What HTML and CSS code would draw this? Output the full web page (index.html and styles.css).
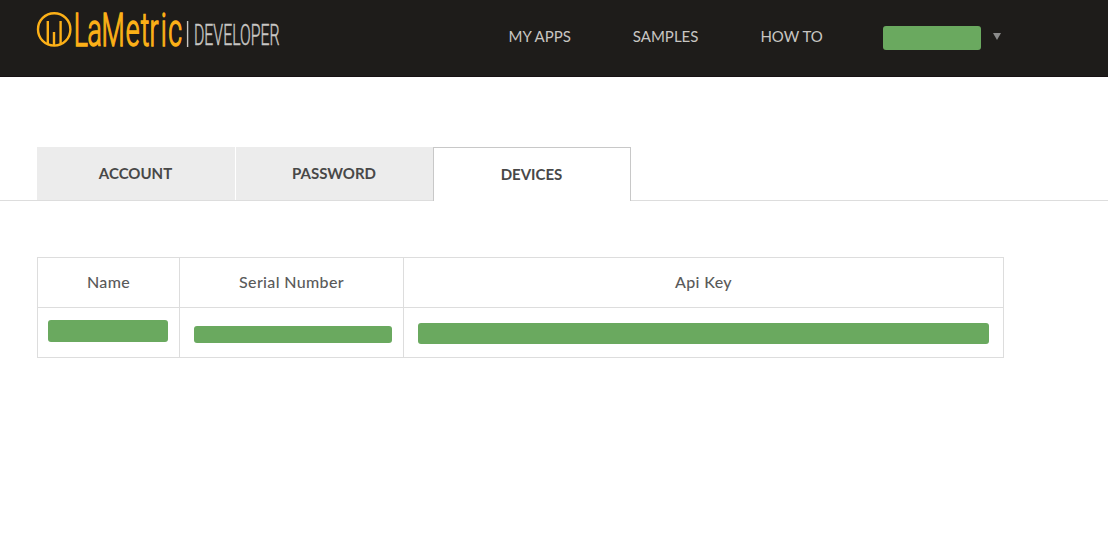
FILE: index.html
```html
<!DOCTYPE html>
<html lang="en">
<head>
<meta charset="utf-8">
<title>LaMetric Developer</title>
<link rel="stylesheet" href="styles.css">
</head>
<body>
<header class="header">
  <a class="logo" aria-label="LaMetric Developer">
    <svg width="256" height="60" viewBox="36 0 256 60">
      <g fill="none" stroke="#fcb017" stroke-width="2.4">
        <circle cx="54.2" cy="29.4" r="16.2"/>
        <path d="M47.8 21v23M54 32v14M60.6 21v23"/>
      </g>
      <text class="logo-name" transform="scale(.57 1)" x="129.5 153.3 178.1 220.7 247 262.3 281.8 295.1" y="46.4">LaMetric</text>
      <path d="M187.6 21v26" stroke="#c8c6c3" stroke-width="1.4"/>
      <text class="logo-sub" x="194" y="45" textLength="85.5" lengthAdjust="spacingAndGlyphs">DEVELOPER</text>
    </svg>
  </a>
  <nav class="nav">
    <a class="nav-link">MY APPS</a>
    <a class="nav-link">SAMPLES</a>
    <a class="nav-link">HOW TO</a>
  </nav>
  <div class="user">
    <span class="mask mask-user"></span>
    <svg class="caret" width="8" height="7" viewBox="0 0 8 7"><path d="M0 0h8L4 7z" fill="#8b8b8b"/></svg>
  </div>
</header>
<div class="tabs">
  <a class="tab">ACCOUNT</a>
  <a class="tab">PASSWORD</a>
  <a class="tab tab-active">DEVICES</a>
</div>
<table class="devices">
  <colgroup><col class="col-name"><col class="col-serial"><col class="col-key"></colgroup>
  <tr><th>Name</th><th>Serial Number</th><th>Api Key</th></tr>
  <tr>
    <td><div class="mask mask-name"></div></td>
    <td><div class="mask mask-serial"></div></td>
    <td><div class="mask mask-key"></div></td>
  </tr>
</table>
</body>
</html>
```
FILE: styles.css
```css
* { box-sizing: border-box; }
body { margin: 0; background: #fff; font-family: Lato, sans-serif; color: #444; }
.header { display: flex; align-items: flex-start; height: 77px; padding-left: 36px; background: #1e1c1a; border-bottom: 1px solid #171113; }
.logo, .logo svg { display: block; }
.logo svg { overflow: visible; }
.logo-name { font: 300 47px Roboto, sans-serif; fill: #fcb017; stroke: #fcb017; stroke-width: 1.5px; }
.logo-sub { font: 300 29px Roboto, sans-serif; fill: #c8c6c3; stroke: #c8c6c3; stroke-width: .5px; }
.nav { display: flex; gap: 62px; margin-left: 216.5px; padding-top: 26px; }
.nav-link { font-size: 15px; line-height: 20px; color: #c8c6c3; white-space: nowrap; }
.user { display: flex; margin-left: auto; width: 225px; padding-top: 26px; }
.mask { background: #6aa95f; border-radius: 3px; }
.mask-user { width: 98px; height: 24px; }
.caret { margin: 7px 0 0 12px; }
.tabs { display: flex; height: 54px; margin-top: 70px; padding-left: 37px; border-bottom: 1px solid #ddd; }
.tab { width: 198px; height: 53px; margin-right: 1px; padding-right: 1px; background: #ececec; font-size: 15px; font-weight: 700; line-height: 53px; text-align: center; color: #484848; }
.tab + .tab { width: 197px; margin-right: 0; }
.tabs .tab-active { width: 198px; height: 54px; background: #fff; border: 1px solid #c8c8c8; border-bottom: 0; }
.devices { width: 967px; margin: 56px 0 0 37px; border-collapse: collapse; table-layout: fixed; }
.col-name { width: 142px; }
.col-serial { width: 224px; }
.devices th, .devices td { height: 50px; padding: 0; border: 1px solid #ddd; }
.devices th { padding-bottom: 2px; font-size: 16px; font-weight: 500; letter-spacing: .35px; color: #5a5a5a; }
.devices td { vertical-align: top; }
.mask-name { width: 120px; height: 22px; margin: 12px 0 0 10px; }
.mask-serial { width: 198px; height: 17px; margin: 18px 0 0 14px; }
.mask-key { width: 571px; height: 21px; margin: 15px 0 0 14px; }
```
